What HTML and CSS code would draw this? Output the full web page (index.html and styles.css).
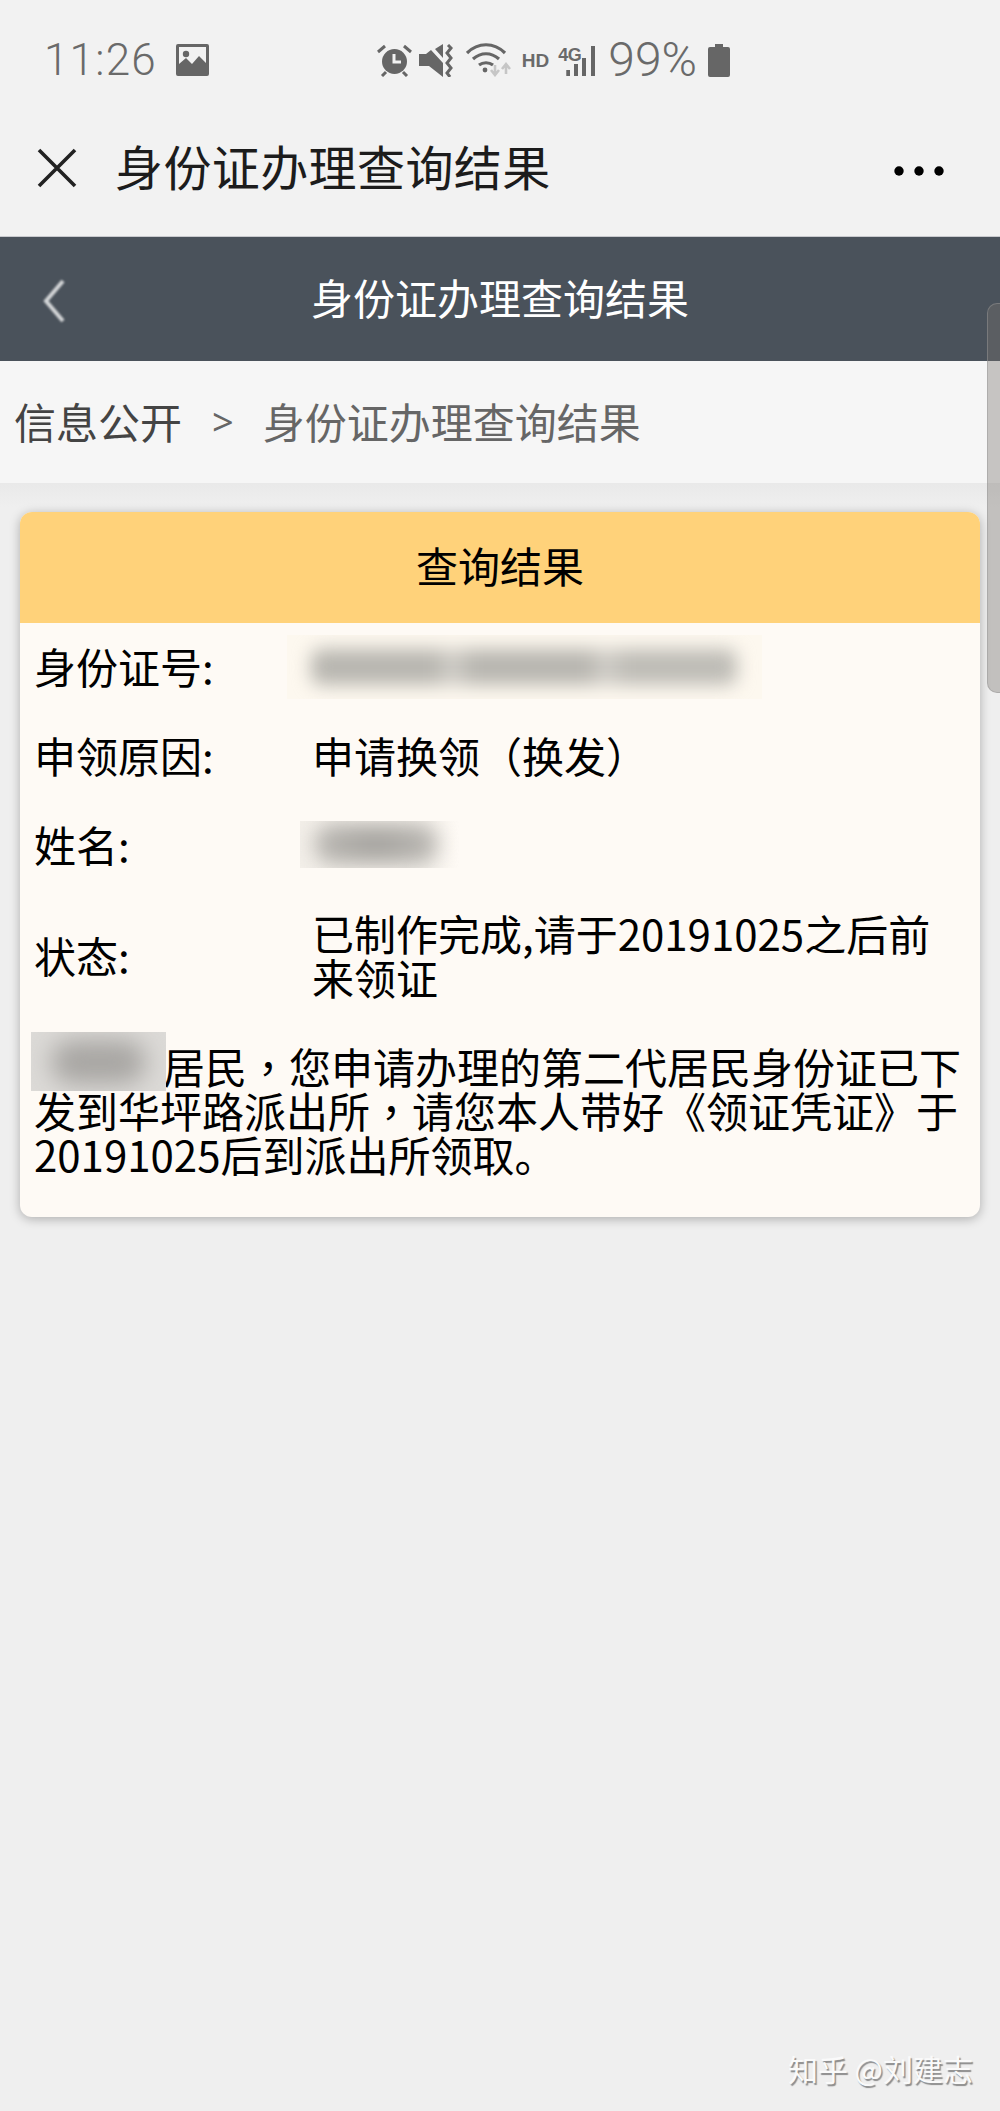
FILE: index.html
```html
<!DOCTYPE html>
<html lang="zh-CN">
<head>
<meta charset="utf-8">
<title>身份证办理查询结果</title>
<link rel="stylesheet" href="styles.css">
</head>
<body>
<div class="page">
  <div class="statusbar">
    <div class="status-left">
      <span class="clock">11:26</span>
      <svg class="ico-image" viewBox="0 0 33 32"><path fill="#666" fill-rule="evenodd" d="M2 0h29a2 2 0 0 1 2 2v28a2 2 0 0 1-2 2H2a2 2 0 0 1-2-2V2a2 2 0 0 1 2-2zM3 3v17l7-6 6 6 7-8 7 7V3z"/><circle cx="10" cy="10" r="3.2" fill="#666"/></svg>
    </div>
    <div class="status-right">
      <svg class="ico-alarm" viewBox="0 0 35 33"><circle cx="17.5" cy="17.5" r="12.5" fill="#666"/><path d="M17 10v8h7" fill="none" stroke="#f2f2f2" stroke-width="3"/><path d="M1 8 8 2M34 8 27 2M5 32l4-4M30 32l-4-4" stroke="#666" stroke-width="3" fill="none"/></svg>
      <svg class="ico-mute" viewBox="0 0 34 33"><path fill="#666" d="M0 10h7L12 6l12 13v14L10 22H0zM16 5l8-5v14z"/><path d="M29 1l3 3-4 5 4 5-4 5 4 5-4 5 3 4" fill="none" stroke="#666" stroke-width="3"/></svg>
      <svg class="ico-wifi" viewBox="0 0 45 34"><path d="M1 10c11-11 27-11 38 0M7 16c8-7 18-7 26 0M13 22c4-3 10-3 14 0" fill="none" stroke="#666" stroke-width="3.2"/><circle cx="19" cy="27" r="2.4" fill="#666"/><path d="M29 22v9M25 27l4 5 4-5M40 31v-9M36 26l4-5 4 5" fill="none" stroke="#c6c6c6" stroke-width="2.6"/></svg>
      <span class="hd">HD</span>
      <div class="net">
        <span class="net-label">4G</span>
        <svg class="ico-signal" viewBox="0 0 30 30"><path fill="#666" d="M0 24h4v6H0zM8 18h4v12H8zM16 12h4v18h-4zM25 0h4v30h-4z"/></svg>
      </div>
      <span class="battery-pct">99%</span>
      <svg class="ico-battery" viewBox="0 0 22 33"><path fill="#666" d="M7 0h8v3h5a2 2 0 0 1 2 2v26a2 2 0 0 1-2 2H2a2 2 0 0 1-2-2V5a2 2 0 0 1 2-2h5z"/></svg>
    </div>
  </div>

  <div class="toolbar">
    <svg class="ico-close" viewBox="0 0 40 40"><path d="M2 2l36 36M38 2 2 38" stroke="#222" stroke-width="3.6" fill="none"/></svg>
    <span class="toolbar-title">身份证办理查询结果</span>
    <svg class="ico-more" viewBox="0 0 50 10"><circle cx="5" cy="5" r="4.7"/><circle cx="25" cy="5" r="4.7"/><circle cx="45" cy="5" r="4.7"/></svg>
  </div>

  <div class="nav">
    <svg class="ico-back" viewBox="0 0 24 44"><path d="M21 2 4 22l17 20" fill="none" stroke="#d4d6d8" stroke-width="4"/></svg>
    <span class="nav-title">身份证办理查询结果</span>
  </div>

  <div class="crumbs">
    <span class="crumb-link">信息公开</span>
    <span class="crumb-sep">&gt;</span>
    <span class="crumb-current">身份证办理查询结果</span>
  </div>

  <main class="content">
    <section class="card">
      <h1 class="card-head">查询结果</h1>
      <div class="rows">
        <div class="row">
          <span class="label">身份证号:</span>
          <div class="redact redact-id"><i class="smear smear-id"></i></div>
        </div>
        <div class="row">
          <span class="label">申领原因:</span>
          <span class="value">申请换领（换发）</span>
        </div>
        <div class="row">
          <span class="label">姓名:</span>
          <div class="redact redact-name"><i class="smear smear-name"></i></div>
        </div>
        <div class="row">
          <span class="label">状态:</span>
          <span class="value">已制作完成,请于20191025之后前来领证</span>
        </div>
      </div>
      <p class="notice"><span class="redact redact-inline"><i class="smear smear-inline"></i></span>居民<span class="mid-punct" lang="zh-TW">，</span>您申请办理的第二代居民身份证已下发到华坪路派出所<span class="mid-punct" lang="zh-TW">，</span>请您本人带好<span class="mid-punct" lang="zh-TW">《</span>领证凭证<span class="mid-punct" lang="zh-TW">》</span>于20191025后到派出所领取。</p>
    </section>
    <div class="watermark">知乎 @刘建志</div>
  </main>

  <div class="scrollbar"></div>
</div>
</body>
</html>
```
FILE: styles.css
```css
* { box-sizing: border-box; }
html, body { margin: 0; padding: 0; }
body {
  font-family: "Noto Sans CJK SC", "Noto Sans", sans-serif;
  background: #efefef;
  color: #000;
}
.page {
  position: relative;
  width: 1000px;
  height: 2111px;
  overflow: hidden;
  display: flex;
  flex-direction: column;
}

/* status bar */
.statusbar {
  height: 120px;
  background: #f2f2f2;
  display: flex;
  justify-content: space-between;
  align-items: flex-start;
  padding: 43px 270px 0 44px;
  color: #6a6a6a;
}
.status-left, .status-right { display: flex; align-items: center; height: 34px; }
.clock {
  font-family: Roboto, sans-serif;
  font-weight: 300;
  font-size: 44px;
  line-height: 34px;
  letter-spacing: 1.2px;
}
.ico-image { width: 33px; height: 32px; margin-left: 19px; }
.ico-alarm { width: 35px; height: 33px; }
.ico-mute { width: 34px; height: 33px; margin-left: 7px; }
.ico-wifi { width: 45px; height: 34px; margin-left: 13px; }
.hd {
  font-family: "Liberation Sans", sans-serif;
  font-weight: 700;
  font-size: 19px;
  line-height: 34px;
  margin-left: 11px;
  padding-top: 2px;
}
.net { position: relative; width: 37px; height: 30px; margin-left: 9px; }
.net-label {
  position: absolute;
  left: 0; top: 1px;
  font-family: "Liberation Sans", sans-serif;
  font-weight: 700;
  font-size: 18px;
  line-height: 18px;
  letter-spacing: -0.5px;
}
.ico-signal { position: absolute; left: 8px; top: 1px; width: 30px; height: 30px; clip-path: polygon(0 40%, 65% 40%, 65% 0, 100% 0, 100% 100%, 0 100%); }
.battery-pct {
  font-family: Roboto, sans-serif;
  font-weight: 300;
  font-size: 48px;
  line-height: 34px;
  margin-left: 13px;
}
.ico-battery { width: 22px; height: 33px; margin-left: 11px; }

/* toolbar */
.toolbar {
  height: 117px;
  background: #f2f2f2;
  border-bottom: 1px solid #c9cace;
  display: flex;
  align-items: center;
  padding: 0 0 20px 37px;
}
.ico-close { width: 40px; height: 40px; flex: none; }
.toolbar-title {
  margin: -6px 0 0 38px;
  font-size: 48px;
  line-height: 60px;
  letter-spacing: 0.4px;
  color: #1c1c1c;
  flex: 1;
}
.ico-more { width: 50px; height: 10px; margin: 5px 56px 0 0; fill: #000; }

/* page header */
.nav {
  height: 124px;
  background: #4a525b;
  position: relative;
  display: flex;
  align-items: center;
  justify-content: center;
}
.ico-back {
  position: absolute;
  left: 42px; top: 42px;
  width: 24px; height: 44px;
  filter: blur(0.8px);
}
.nav-title { color: #fff; font-size: 42px; line-height: 50px; margin-top: -4px; }

/* breadcrumbs */
.crumbs {
  height: 122px;
  background: #f6f6f6;
  display: flex;
  align-items: center;
  padding: 0 0 2px 14px;
  font-size: 42px;
  line-height: 50px;
}
.crumb-link { color: #444; }
.crumb-sep { color: #666; margin: 0 29px 0 30px; font-size: 38px; font-family: "Noto Sans", sans-serif; }
.crumb-current { color: #666; }

/* content */
.content {
  flex: 1;
  padding: 29px 20px 0;
  display: flex;
  flex-direction: column;
  background: linear-gradient(#e9e9e9, #efefef 24px);
}
.card {
  background: #fefaf5;
  border-radius: 12px;
  box-shadow: 0 2px 11px rgba(0, 0, 0, 0.28);
  overflow: hidden;
  padding-bottom: 41px;
  flex: none;
}
.card-head {
  margin: 0;
  height: 111px;
  background: #ffd27a;
  font-size: 42px;
  font-weight: 400;
  line-height: 106px;
  text-align: center;
}
.rows {
  display: grid;
  gap: 1px;
  margin-top: -1px;
  padding-left: 14px;
}
.row {
  display: grid;
  grid-template-columns: 278px 640px;
  align-items: center;
  padding: 22px 0;
  font-size: 42px;
  line-height: 44px;
}
.notice {
  margin: 23px 0 0;
  padding: 0 12px 0 14px;
  font-size: 42px;
  line-height: 44px;
}
.mid-punct { font-family: "Noto Sans CJK TC", sans-serif; }

/* blurred-out private data */
.redact { display: block; overflow: hidden; position: relative; }
.smear { position: absolute; display: block; }
.redact-id {
  width: 475px; height: 64px;
  margin: -9px 0 -11px -25px;
  background: #fdf8ef;
}
.smear-id {
  left: 24px; top: 14px; width: 426px; height: 36px;
  background: linear-gradient(90deg, #b8b6b0 0 29%, #d2cfc9 33%, #b8b6b0 38% 65%, #d2cfc9 69%, #bebcb6 74%);
  border-radius: 10px;
  filter: blur(9px);
}
.redact-name {
  width: 159px; height: 47px;
  margin: -1px 0 -2px -12px;
  background: linear-gradient(90deg, #f3efe9, #f6f2ec 80%, #fefaf5);
}
.smear-name {
  left: 14px; top: 2px; width: 124px; height: 42px;
  background: radial-gradient(#9f9d99, #c8c5c0);
  border-radius: 20px;
  filter: blur(10px);
}
.redact-inline {
  display: inline-block;
  width: 135px; height: 59px;
  margin: -12px -3px -3px -3px;
  vertical-align: top;
  background: #dcdad7;
}
.smear-inline {
  left: 20px; top: 8px; width: 95px; height: 44px;
  background: #a8a6a3;
  border-radius: 22px;
  filter: blur(12px);
}

/* watermark */
.watermark {
  margin-top: auto;
  margin-bottom: 24px;
  text-align: right;
  margin-right: 7px;
  font-size: 30px;
  line-height: 38px;
  color: #fafafa;
  text-shadow: 1.5px 1.5px 1px rgba(0, 0, 0, 0.42);
}

/* overlay scrollbar */
.scrollbar {
  position: absolute;
  right: 0; top: 303px;
  width: 13px; height: 390px;
  border-radius: 10px 0 0 10px;
  background: rgba(120, 115, 110, 0.38);
  border: 1px solid rgba(150, 150, 150, 0.5);
  border-right: 0;
}
```
